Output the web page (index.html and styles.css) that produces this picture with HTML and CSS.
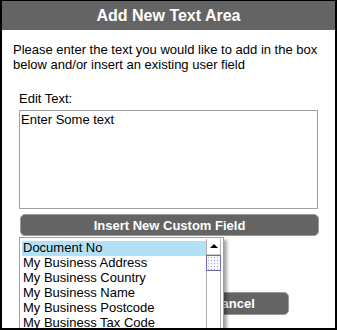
FILE: index.html
```html
<!DOCTYPE html>
<html lang="en">

<head>
    <meta charset="UTF-8" />
    <meta name="viewport" content="width=device-width, initial-scale=1.0" />
    <title>Add New Text Area</title>
    <link rel="stylesheet" href="styles.css">
</head>

<body>
    <div class="dialog">
        <div class="dialog-title">Add New Text Area</div>

        <p class="intro">Please enter the text you would like to add in the box below and/or insert an existing user field</p>

        <div class="field">
            <label for="editText">Edit Text:</label>
            <textarea id="editText">Enter Some text</textarea>
            <button class="btn btn-wide" type="button">Insert New Custom Field</button>
        </div>

        <div class="actions">
            <button class="btn" type="button">OK</button>
            <button class="btn" type="button">Cancel</button>
        </div>

        <!-- dropdown opened from "Insert New Custom Field" -->
        <div class="field-list">
            <ul class="field-items">
                <li class="selected">Document No</li>
                <li>My Business Address</li>
                <li>My Business Country</li>
                <li>My Business Name</li>
                <li>My Business Postcode</li>
                <li>My Business Tax Code</li>
                <li>My Business Telephone</li>
            </ul>
            <div class="scrollbar">
                <div class="scroll-up"></div>
                <div class="scroll-thumb"></div>
            </div>
        </div>
    </div>
</body>

</html>
```

FILE: styles.css
```css
body {
    margin: 0;
    font-family: "Liberation Sans", Arial, sans-serif;
    font-size: 13px;
    color: #000;
    background: #fff;
}

.dialog {
    position: relative;
    width: 337px;
    height: 330px;
    box-sizing: border-box;
    border: 2px solid #000;
    border-top-width: 1px;
    overflow: hidden;
    background: #fff;
}

.dialog-title {
    margin: 0 -1px;
    height: 29px;
    line-height: 29px;
    background: #646464;
    color: #fff;
    font-size: 16px;
    font-weight: bold;
    text-align: center;
}

.intro {
    margin: 12px 0 0;
    padding: 0 11px;
    line-height: 15px;
}

.field {
    padding: 0 15px 0 17px;
    margin-top: 19px;
}

label {
    display: block;
    line-height: 15px;
    margin-bottom: 4px;
}

textarea {
    display: block;
    width: 299px;
    height: 99px;
    box-sizing: border-box;
    margin: 0;
    padding: 1px 1px;
    border: 1px solid #a0a0a0;
    font-family: inherit;
    font-size: 13px;
    line-height: 15px;
    resize: none;
    outline: none;
}

.btn {
    display: block;
    height: 23px;
    padding: 0;
    border: 1px solid #9a9a9a;
    border-radius: 5px;
    background: #646464;
    color: #fff;
    font-family: inherit;
    font-size: 13px;
    font-weight: bold;
}

.btn-wide {
    width: 299px;
    height: 22px;
    margin: 5px 0 0 1px;
}

.actions {
    display: flex;
    justify-content: center;
    gap: 19px;
    margin-top: 56px;
}

.actions .btn {
    width: 111px;
}

.field-list {
    position: absolute;
    left: 17px;
    top: 236px;
    width: 205px;
    height: 120px;
    box-sizing: border-box;
    display: flex;
    padding: 1px 1px 0 1px;
    border: 1px solid #a0a0a0;
    background: #fff;
    box-shadow: 3px 3px 3px rgba(0, 0, 0, 0.35);
}

.field-items {
    flex: 1;
    list-style: none;
    margin: 0;
    padding: 2px 0 0 1px;
}

.field-items li {
    height: 15px;
    line-height: 14px;
    padding-left: 1px;
    white-space: nowrap;
}

.field-items li.selected {
    background: #b2e0f6;
}

.scrollbar {
    width: 15px;
    margin-right: 1px;
    box-sizing: border-box;
    border-left: 1px solid #b0b0b0;
    border-right: 1px solid #b0b0b0;
}

.scroll-up {
    position: relative;
    height: 15px;
    border-bottom: 1px solid #c8c8c8;
    background: #fff;
}

.scroll-up::after {
    content: "";
    position: absolute;
    left: 3px;
    top: 5px;
    border-left: 4px solid transparent;
    border-right: 4px solid transparent;
    border-bottom: 4px solid #000;
}

.scroll-thumb {
    height: 16px;
    box-sizing: border-box;
    margin: 0 -1px;
    border: 1px solid #6c6cb0;
    background-color: #f6f6fc;
    background-image: radial-gradient(#a8a8d8 0.5px, transparent 0.8px);
    background-size: 3px 3px;
}
```
